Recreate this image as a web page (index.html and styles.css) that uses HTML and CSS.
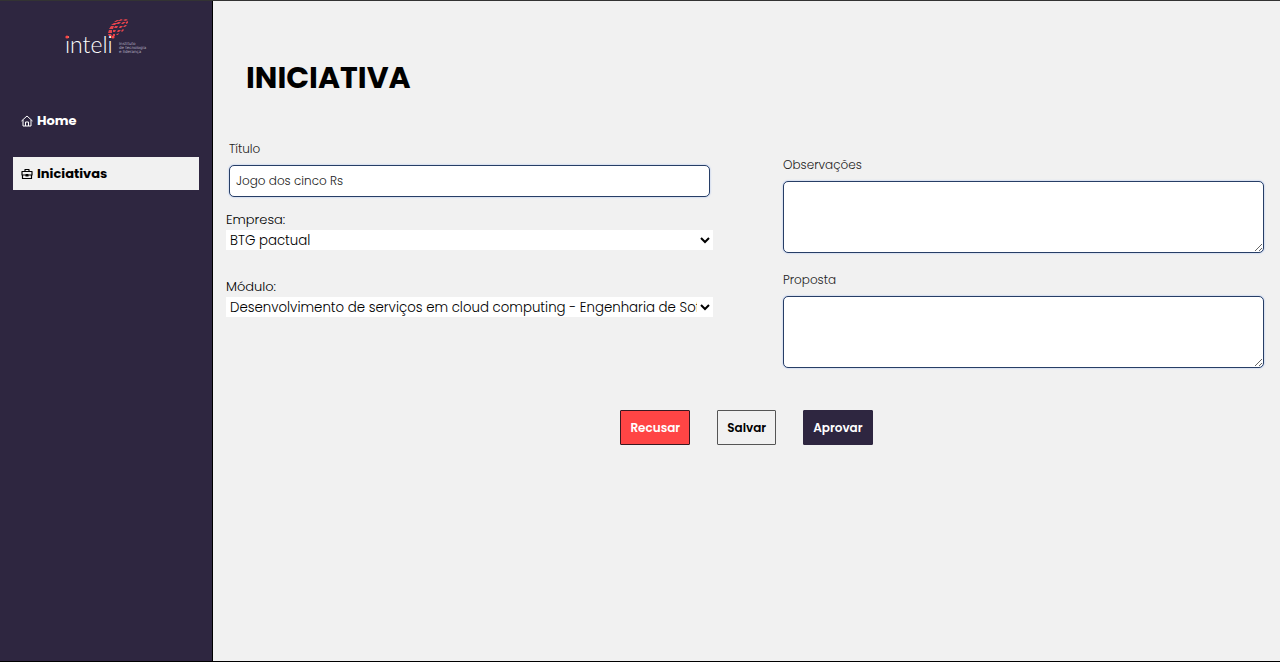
FILE: index.html
```html
<!DOCTYPE html>
<html lang="pt-BR">
<head>
<meta charset="utf-8">
<meta name="viewport" content="width=device-width, initial-scale=1">
<title>Iniciativa</title>
<link rel="stylesheet" href="styles.css">
</head>
<body>
<div class="app">
  <aside class="sidebar">
    <svg class="logo" viewBox="0 0 84 40" role="img" aria-label="Inteli">
      <text class="logo-name" x="0" y="35">inteli</text>
      <circle class="logo-dot" cx="2" cy="19" r="1.6"/>
      <circle class="logo-dot" cx="48" cy="19" r="1.6"/>
      <g class="logo-small">
        <text x="54" y="27">instituto</text>
        <text x="54" y="31">de tecnologia</text>
        <text x="54" y="35">e liderança</text>
      </g>
      <g class="logo-globe">
        <path d="M49 4l3-2 2 0-3 2zM53 3l3-2 2 1-3 1zM58 2l3-1 2 1-3 1z"/>
        <path d="M46 7l3-2 3 0-2 2zM51 6l2-2 3 0-2 2zM56 6l2-2 3 0-3 2zM61 4l2-1 0 2-2 1z"/>
        <path d="M44 11l2-3 3 0-1 3zM49 10l1-2 3 0-1 2zM54 10l1-2 3 0-2 2zM58 9l2-2 2 0-2 2z"/>
        <path d="M43 15l1-3 3 0 0 3zM48 14l0-2 3 0-1 2zM52 14l1-2 3 0-2 2zM56 13l2-2 1 1-2 2z"/>
        <path d="M44 18l-1-2 3 0 1 2zM48 18l0-2 2 0 0 2zM51 17l1-1 2-1-1 2z"/>
      </g>
    </svg>
    <nav class="menu">
      <a class="menu-item" href="#home">
        <svg class="icon" viewBox="0 0 24 24" aria-hidden="true"><path d="M1 12L12 2l11 10M4 10v12h16V10M9 22v-8h6v8"/></svg>
        Home
      </a>
      <a class="menu-item menu-item-active" href="#iniciativas" aria-current="page">
        <svg class="icon icon-bold" viewBox="0 0 24 24" aria-hidden="true"><path d="M2 7h20v7H2zM3 14v7h18v-7M8 7V3h8v4M10 13h4v3h-4z"/></svg>
        Iniciativas
      </a>
    </nav>
  </aside>
  <main class="content">
    <h1 class="title">INICIATIVA</h1>
    <form class="form">
      <div class="columns">
        <div class="column">
          <div class="field">
            <label class="field-label" for="titulo">Título</label>
            <input class="box" id="titulo" type="text" value="Jogo dos cinco Rs">
          </div>
          <div class="choice">
            <label class="choice-label" for="empresa">Empresa:</label>
            <select class="select" id="empresa"><option>BTG pactual</option></select>
          </div>
          <div class="choice">
            <label class="choice-label" for="modulo">Módulo:</label>
            <select class="select" id="modulo"><option>Desenvolvimento de serviços em cloud computing - Engenharia de Software</option></select>
          </div>
        </div>
        <div class="column column-notes">
          <div class="field">
            <label class="field-label" for="observacoes">Observações</label>
            <textarea class="box box-area" id="observacoes"></textarea>
          </div>
          <div class="field">
            <label class="field-label" for="proposta">Proposta</label>
            <textarea class="box box-area" id="proposta"></textarea>
          </div>
        </div>
      </div>
      <div class="actions">
        <button class="button button-refuse" type="button">Recusar</button>
        <button class="button" type="button">Salvar</button>
        <button class="button button-approve" type="button">Aprovar</button>
      </div>
    </form>
  </main>
</div>
</body>
</html>
```
FILE: styles.css
```css
* {
  box-sizing: border-box;
}

body {
  margin: 0;
  background: #f1f1f1;
  color: #000;
  font-family: Poppins, Inter, "Open Sans", sans-serif;
}

.app {
  display: flex;
  min-height: 100vh;
  border-top: 1px solid #333;
  border-bottom: 1px solid #000;
}

.sidebar {
  flex: 0 0 213px;
  padding: 17px 13px;
  border-right: 1px solid #000;
  background: #2e2640;
}

.logo {
  display: block;
  width: 84px;
  height: 40px;
  margin-left: 52px;
}

.logo-name {
  fill: #fff;
  font-family: Lato, sans-serif;
  font-size: 23px;
  font-weight: 300;
}

.logo-small {
  fill: #b5afc0;
  font-family: "DejaVu Sans", sans-serif;
  font-size: 4px;
}

.logo-dot {
  fill: #ff4545;
}

.logo-globe {
  fill: #e3424b;
}

.menu {
  display: flex;
  flex-direction: column;
  gap: 20px;
  margin-top: 46px;
}

.menu-item {
  display: flex;
  align-items: center;
  gap: 4px;
  height: 33px;
  padding: 0 8px;
  color: #fff;
  font-size: 13px;
  font-weight: 700;
  text-decoration: none;
}

.menu-item-active {
  background: #f1f1f1;
  color: #000;
}

.icon {
  width: 12px;
  height: 12px;
  fill: none;
  stroke: currentColor;
  stroke-width: 2;
  stroke-linejoin: round;
}

.icon-bold {
  stroke-width: 2.4;
}

.content {
  flex: 1;
  min-width: 0;
  padding: 57px 13px 24px;
}

.title {
  margin: 0 0 43px 20px;
  font-size: 30px;
  line-height: 40px;
  font-weight: 700;
}

.columns {
  display: grid;
  grid-template-columns: minmax(0, 1fr) minmax(0, 1fr);
  gap: 67px;
}

.column {
  display: flex;
  flex-direction: column;
  gap: 13px;
}

.column-notes {
  gap: 19px;
  padding-top: 16px;
}

.field {
  display: flex;
  flex-direction: column;
  gap: 9px;
  padding: 0 3px;
}

.field-label {
  color: #222;
  font-size: 12px;
  line-height: 15px;
  font-weight: 300;
}

.box {
  width: 100%;
  height: 32px;
  padding: 0 6px;
  border: 1px solid #273e66;
  border-radius: 5px;
  outline: 0;
  background: #fff;
  box-shadow: 0 0 2px #9fb9ee;
  color: #222;
  font: 300 12px Poppins, Inter, sans-serif;
}

.box-area {
  height: 72px;
  padding: 6px;
  resize: both;
}

.choice {
  display: flex;
  flex-direction: column;
  margin-bottom: 14px;
}

.choice-label {
  font-size: 13px;
  line-height: 20px;
  font-weight: 300;
}

.select {
  width: 100%;
  height: 20px;
  padding: 0;
  border: 0;
  background: #fff;
  color: #000;
  font-family: Poppins, Inter, sans-serif;
  font-weight: 300;
}

.actions {
  display: flex;
  justify-content: center;
  gap: 27px;
  margin-top: 42px;
}

.button {
  height: 35px;
  padding: 0 9px;
  border: 1px solid #555;
  border-radius: 1px;
  background: #f1f1f1;
  color: #000;
  font: 600 12px Poppins, Inter, sans-serif;
}

.button-refuse {
  border-color: #3a1820;
  background: #ff4545;
  color: #fff;
}

.button-approve {
  border-color: #2e2640;
  background: #2e2640;
  color: #fff;
}
```
